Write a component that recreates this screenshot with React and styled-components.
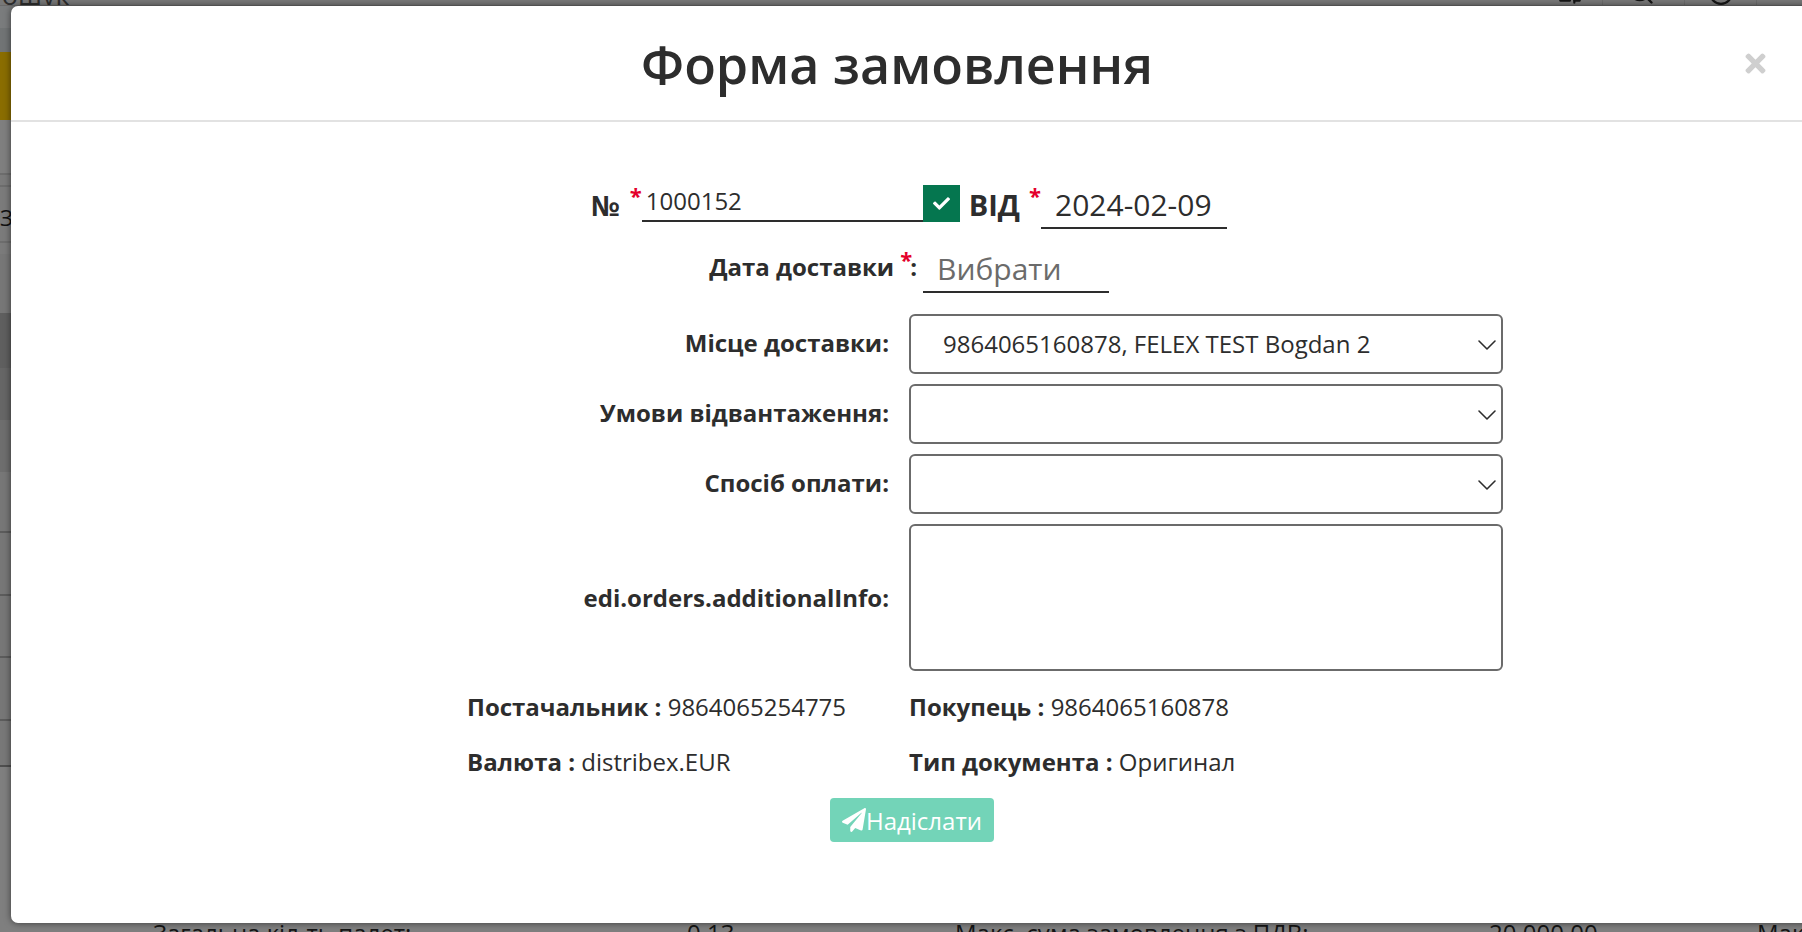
import React from "react";
import styled, { createGlobalStyle } from "styled-components";
import { FaPaperPlane, FaCheck, FaTimes } from "react-icons/fa";
import { Search, SlidersHorizontal, CircleCheck, ChevronDown } from "lucide-react";

const Global = createGlobalStyle`
  html, body { margin: 0; padding: 0; height: 100%; overflow: hidden; background: #7f7f7f; }
  * { box-sizing: border-box; }
  body { font-family: "Open Sans", "Liberation Sans", sans-serif; color: #2d2d2d; }
`;

const Page = styled.div`
  position: relative;
  width: 1802px;
  height: 932px;
  overflow: hidden;
  background: #7f7f7f;
`;

const Backdrop = styled.div`
  display: flex;
  flex-direction: column;
  height: 100%;
`;

const TopBar = styled.div`
  height: 6px;
  flex: none;
  display: flex;
  align-items: flex-end;
  overflow: hidden;
  background: #787878;
  border-bottom: 1px solid #6a6a6a;
`;

const TopTitle = styled.span`
  font-size: 27px;
  line-height: 40px;
  margin-bottom: -10px;
  margin-left: -18px;
  color: #2e2e2e;
  flex: none;
`;

const TopTools = styled.div`
  margin-left: auto;
  display: flex;
  align-items: flex-end;
  color: #151515;
  padding-right: 45px;
  svg { display: block; margin-bottom: -1px; }
`;

const ToolCell = styled.div`
  width: ${p => p.$w}px;
  height: 40px;
  display: flex;
  justify-content: center;
  align-items: flex-end;
  padding: 0 ${p => p.$pr || 0}px 0 ${p => p.$pl || 0}px;
  border-right: 1px solid #6c6c6c;
`;

const Band = styled.div`
  flex: none;
  height: ${p => p.$h}px;
  background: ${p => p.$bg};
  border-bottom: ${p => (p.$line ? `2px solid ${p.$line}` : "none")};
`;

const BandText = styled(Band)`
  padding-top: 15px;
  font-size: 22px;
  line-height: 30px;
  color: #111;
  overflow: hidden;
`;

const BottomRow = styled.div`
  flex: 1;
  overflow: hidden;
  background: #7f7f7f;
  display: grid;
  grid-template-columns: 153px 534px 268px 534px 268px 1fr;
  font-size: 24px;
  line-height: 24px;
  color: #151515;
  white-space: nowrap;
  margin-top: -1px;
`;

const Modal = styled.section`
  position: absolute;
  left: 11px;
  top: 6px;
  width: 1820px;
  height: 917px;
  background: #fff;
  border-radius: 7px;
  box-shadow: 0 0 7px rgba(0, 0, 0, 0.55);
`;

const Header = styled.header`
  position: relative;
  height: 116px;
  width: 1791px;
  display: flex;
  justify-content: center;
  padding-right: 19px;
  border-bottom: 2px solid #e2e2e2;
`;

const Title = styled.h1`
  margin: 0;
  font-size: 52px;
  font-weight: 600;
  line-height: 115px;
  color: #2d2d2d;
`;

const Close = styled.button`
  position: absolute;
  left: 1730px;
  top: 43px;
  padding: 0;
  border: 0;
  background: none;
  color: #cfcfcf;
  font-size: 29px;
  line-height: 1;
  svg { display: block; }
`;

const Form = styled.form`
  width: 1035px;
  margin-left: 457px;
  padding-top: 63px;
  display: flex;
  flex-direction: column;
`;

const NumberRow = styled.div`
  display: flex;
  align-items: flex-start;
  height: 44px;
  margin-left: 123px;
`;

const Heading = styled.span`
  font-size: ${p => p.$size || 28}px;
  font-weight: 700;
  line-height: 40px;
  white-space: nowrap;
  margin-left: ${p => p.$ml || 0}px;
`;

const Star = styled.sup`
  color: #e4002b;
  font-size: 22px;
  font-weight: 700;
  line-height: 0;
  position: relative;
  top: ${p => p.$top}px;
  vertical-align: baseline;
  margin-left: ${p => p.$ml}px;
  margin-right: ${p => p.$mr || 0}px;
`;

const NumberInput = styled.input`
  width: 281px;
  height: 37px;
  padding: 0 3px 4px 4px;
  border: 0;
  border-bottom: 2px solid #2d2d2d;
  outline: 0;
  background: none;
  font: 400 24px/30px "Open Sans", sans-serif;
  color: #2d2d2d;
`;

const CheckBox = styled.span`
  flex: none;
  width: 37px;
  height: 37px;
  display: flex;
  align-items: center;
  justify-content: center;
  background: #05764f;
  color: #fff;
  font-size: 17px;
`;

const DateInput = styled.input`
  width: 186px;
  height: 44px;
  padding: 0 0 3px 14px;
  border: 0;
  border-bottom: 2px solid #2d2d2d;
  outline: 0;
  background: none;
  font: 400 30px/40px "Open Sans", sans-serif;
  color: #2d2d2d;
  &::placeholder { color: #6b6b6b; opacity: 1; }
`;

const DateRow = styled.div`
  display: grid;
  grid-template-columns: 455px 186px;
  height: 44px;
  margin-top: 20px;
`;

const DateLabel = styled.label`
  display: flex;
  justify-content: flex-end;
  align-items: center;
  padding-right: 6px;
  padding-bottom: 10px;
  font-size: 24px;
  font-weight: 700;
  white-space: nowrap;
`;

const FieldRow = styled.div`
  display: grid;
  grid-template-columns: 421px 594px;
  column-gap: 20px;
  align-items: center;
  margin-top: ${p => p.$mt ?? 10}px;
`;

const FieldLabel = styled.label`
  text-align: right;
  font-size: 24px;
  font-weight: 700;
  white-space: nowrap;
  padding-bottom: ${p => p.$pb ?? 4}px;
`;

const SelectWrap = styled.div`
  position: relative;
  height: 60px;
`;

const Select = styled.select`
  appearance: none;
  width: 100%;
  height: 100%;
  padding: 0 0 2px 32px;
  background: #fff;
  border: 2px solid #6b6b6b;
  border-radius: 6px;
  font: 400 24px "Open Sans", sans-serif;
  color: #2d2d2d;
  outline: 0;
`;

const Chevron = styled.span`
  position: absolute;
  right: 0;
  top: 15px;
  pointer-events: none;
  color: #2d2d2d;
  svg { display: block; }
`;

const TextArea = styled.textarea`
  display: block;
  width: 100%;
  height: 147px;
  padding: 8px 12px;
  border: 2px solid #6b6b6b;
  border-radius: 6px;
  background: #fff;
  resize: none;
  outline: 0;
`;

const InfoGrid = styled.dl`
  margin: 20px 0 0 -1px;
  display: grid;
  grid-template-columns: 442px 594px;
  row-gap: 23px;
  font-size: 24px;
  line-height: 32px;
`;

const InfoItem = styled.div`
  white-space: nowrap;
  dt, dd { display: inline; margin: 0; }
  dt { font-weight: 700; }
`;

const SendRow = styled.div`
  margin-top: 20px;
  padding-left: 362px;
`;

const SendButton = styled.button`
  width: 164px;
  height: 44px;
  display: flex;
  align-items: center;
  justify-content: center;
  padding: 0;
  border: 0;
  border-radius: 4px;
  background: #73d4b8;
  color: #fff;
  font: 400 24px "Open Sans", sans-serif;
  svg { flex: none; }
`;

const bands = [
  [22, "#7a7c7d"], [24, "#717475"], [68, "#8a6d00"], [55, "#7f7f7f", "#6d6d6d"],
  [12, "#7b7b7b", "#6d6d6d"],
];
const bands2 = [
  [11, "#7b7b7b"], [59, "#777777"], [55, "#5f5f5f"], [52, "#666666"], [52, "#6e6e6e"], [61, "#777777", "#5c5c5c"],
  [63, "#777777", "#5c5c5c"], [62, "#777777", "#5c5c5c"], [63, "#777777", "#5c5c5c"],
  [46, "#787878", "#4f4f4f"], [155, "#7f7f7f"],
];

const SelectField = ({ label, value }) => (
  <FieldRow $mt={value ? 21 : 10}>
    <FieldLabel>{label}</FieldLabel>
    <SelectWrap>
      <Select defaultValue={value || ""}>
        <option value={value || ""}>{value}</option>
      </Select>
      <Chevron><ChevronDown size={32} strokeWidth={1.2} /></Chevron>
    </SelectWrap>
  </FieldRow>
);

export default function App() {
  return (
    <Page>
      <Global />
      <Backdrop aria-hidden="true">
        <TopBar>
          <TopTitle>Пошук</TopTitle>
          <TopTools>
            <ToolCell $w={80} $pl={14}><SlidersHorizontal size={26} /></ToolCell>
            <ToolCell $w={82} $pr={6}><Search size={28} /></ToolCell>
            <ToolCell $w={72}><CircleCheck size={26} /></ToolCell>
          </TopTools>
        </TopBar>
        {bands.map(([h, bg, line], i) => <Band key={i} $h={h} $bg={bg} $line={line} />)}
        <BandText $h={56} $bg="#7b7b7b" $line="#6d6d6d">З</BandText>
        {bands2.map(([h, bg, line], i) => <Band key={i} $h={h} $bg={bg} $line={line} />)}
        <BottomRow>
          <span />
          <span>Загальна кіл-ть палет:</span>
          <span>0.13</span>
          <span>Макс. сума замовлення з ПДВ:</span>
          <span>20 000.00</span>
          <span>Макс</span>
        </BottomRow>
      </Backdrop>
      <Modal>
        <Header>
          <Title>Форма замовлення</Title>
          <Close type="button" aria-label="Закрити"><FaTimes /></Close>
        </Header>
        <Form>
          <NumberRow>
            <Heading>№<Star $top={-12} $ml={10}>*</Star></Heading>
            <NumberInput defaultValue="1000152" />
            <CheckBox><FaCheck /></CheckBox>
            <Heading $ml={9} $size={29}>ВІД<Star $top={-12} $ml={9}>*</Star></Heading>
            <DateInput defaultValue="2024-02-09" />
          </NumberRow>
          <DateRow>
            <DateLabel>Дата доставки<Star $top={-7} $ml={6} $mr={-2}>*</Star>:</DateLabel>
            <DateInput placeholder="Вибрати" />
          </DateRow>
          <SelectField label="Місце доставки:" value="9864065160878, FELEX TEST Bogdan 2" />
          <SelectField label="Умови відвантаження:" />
          <SelectField label="Спосіб оплати:" />
          <FieldRow>
            <FieldLabel $pb={0}>edi.orders.additionalInfo:</FieldLabel>
            <TextArea />
          </FieldRow>
          <InfoGrid>
            <InfoItem><dt>Постачальник : </dt><dd>9864065254775</dd></InfoItem>
            <InfoItem><dt>Покупець : </dt><dd>9864065160878</dd></InfoItem>
            <InfoItem><dt>Валюта : </dt><dd>distribex.EUR</dd></InfoItem>
            <InfoItem><dt>Тип документа : </dt><dd>Оригинал</dd></InfoItem>
          </InfoGrid>
          <SendRow>
            <SendButton type="button"><FaPaperPlane size={24} />Надіслати</SendButton>
          </SendRow>
        </Form>
      </Modal>
    </Page>
  );
}
